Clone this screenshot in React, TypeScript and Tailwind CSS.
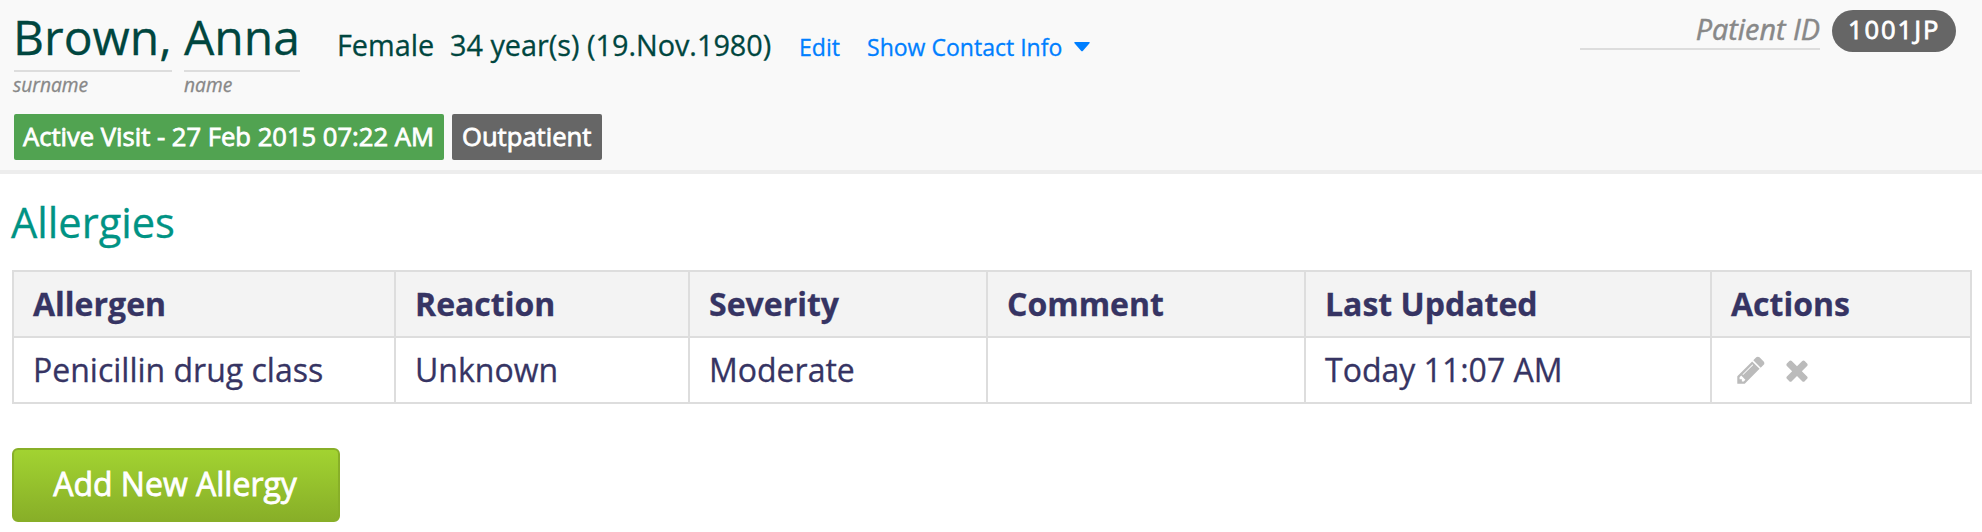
const columns = ["Allergen", "Reaction", "Severity", "Comment", "Last Updated", "Actions"];
const row = ["Penicillin drug class", "Unknown", "Moderate", "", "Today 11:07 AM"];

function CaretDown() {
  return (
    <svg viewBox="0 0 16 10" className="h-2.5 w-4" fill="currentColor">
      <path d="M1 0h14q1 0 .7.9L9 8.800q-1 1-2 0L.3.9Q0 0 1 0z" />
    </svg>
  );
}

function Pencil() {
  return (
    <svg viewBox="0 0 1792 1792" className="size-8" fill="currentColor">
      <path d="M491 1536l91-91-235-235-91 91v107h128v128h107zm523-928q0-22-22-22-10 0-17 7l-542 542q-7 7-7 17 0 22 22 22 10 0 17-7l542-542q7-7 7-17zm-54-192l416 416-832 832h-416v-416zm683 96q0 53-37 90l-166 166-416-416 166-165q36-38 90-38 53 0 91 38l235 234q37 39 37 91z" />
    </svg>
  );
}

function Times() {
  return (
    <svg viewBox="0 0 1792 1792" className="size-8" fill="currentColor">
      <path d="M1490 1322q0 40-28 68l-136 136q-28 28-68 28t-68-28l-294-294-294 294q-28 28-68 28t-68-28l-136-136q-28-28-28-68t28-68l294-294-294-294q-28-28-28-68t28-68l136-136q28-28 68-28t68 28l294 294 294-294q28-28 68-28t68 28l136 136q28 28 28 68t-28 68l-294 294 294 294q28 28 28 68z" />
    </svg>
  );
}

export default function App() {
  return (
    <div className="h-[532px] w-[1982px] overflow-hidden bg-white font-['Open_Sans',sans-serif] whitespace-nowrap [-webkit-text-stroke:0.3px]">
      <header className="flex h-[174px] flex-col border-b-4 border-[#ededed] bg-[#f9f9f9]">
        <div className="flex h-[114px] justify-between pl-3.5">
          <div className="flex text-[#00463f]">
            <div className="w-[158px]">
              <div className="h-[72px] border-b-2 border-[#dddddd] pt-1 text-[48px] leading-[66px] -indent-px">Brown,</div>
              <div className="-ml-px text-[19.2px] leading-[25px] text-[#888888] italic">surname</div>
            </div>
            <div className="ml-3 w-[116px]">
              <div className="h-[72px] border-b-2 border-[#dddddd] pt-1 text-[48px] leading-[66px]">Anna</div>
              <div className="text-[19.2px] leading-[25px] text-[#888888] italic">name</div>
            </div>
            <div className="ml-[37px] flex h-[72px] items-baseline pt-6 text-[28.8px] leading-[42px]">
              <span className="w-[113px]">Female</span>
              <span className="w-[349px]">34 year(s) (19.Nov.1980)</span>
              <a className="w-[68px] text-[23.04px] text-[#007fff]">Edit</a>
              <a className="flex items-baseline gap-3 text-[23.04px] text-[#007fff]">
                Show Contact Info
                <span className="-translate-y-1">
                  <CaretDown />
                </span>
              </a>
            </div>
          </div>
          <div className="flex gap-3 pr-[26px]">
            <div className="h-[50px] w-[240px] border-b-2 border-[#dddddd] pt-2 text-right text-[28.8px] leading-[42px] text-[#888888] italic [-webkit-text-stroke:0.5px]">
              Patient ID
            </div>
            <div className="mt-2.5 h-[42px] w-[124px] rounded-full bg-[#666666] pl-4 text-[25.6px] leading-[40px] tracking-[1.9px] text-white [-webkit-text-stroke:0.8px]">
              1001JP
            </div>
          </div>
        </div>
        <div className="flex gap-2 pl-3.5 text-[25.6px] leading-[45px] text-white [-webkit-text-stroke:0.8px]">
          <span className="h-[46px] w-[430px] rounded-xs bg-[#51a351] pl-[9px]">Active Visit - 27 Feb 2015 07:22 AM</span>
          <span className="h-[46px] w-[150px] rounded-xs bg-[#666666] pl-2.5">Outpatient</span>
        </div>
      </header>
      <main className="pt-6 pl-3">
        <h2 className="-ml-px h-[72px] text-[41.6px] leading-[48px] text-[#009384]">Allergies</h2>
        <table className="w-[1960px] table-fixed border-collapse text-[32px] text-[#363463]">
          <colgroup>
            <col className="w-[382px]" />
            <col className="w-[294px]" />
            <col className="w-[298px]" />
            <col className="w-[318px]" />
            <col className="w-[406px]" />
            <col />
          </colgroup>
          <thead>
            <tr className="h-[66px] bg-[#f3f3f3]">
              {columns.map((name) => (
                <th key={name} className="border-2 border-[#dddddd] p-0 pl-[19px] text-left leading-[60px] font-bold">
                  {name}
                </th>
              ))}
            </tr>
          </thead>
          <tbody>
            <tr className="h-[66px]">
              {row.map((value, index) => (
                <td key={index} className="border-2 border-[#dddddd] p-0 pl-[19px] leading-[60px]">
                  {value}
                </td>
              ))}
              <td className="border-2 border-[#dddddd] p-0 pl-[23px]">
                <div className="flex gap-[14px] text-[#bbbbbb]">
                  <Pencil />
                  <Times />
                </div>
              </td>
            </tr>
          </tbody>
        </table>
        <button className="mt-11 block h-[74px] w-[328px] rounded-md border-2 border-[#88af28] bg-linear-to-b from-[#a2d331] to-[#88af28] pr-0.5 text-[32px] leading-[68px] text-white [-webkit-text-stroke:0.8px]">
          <span className="block h-[70px]">Add New Allergy</span>
        </button>
      </main>
    </div>
  );
}
